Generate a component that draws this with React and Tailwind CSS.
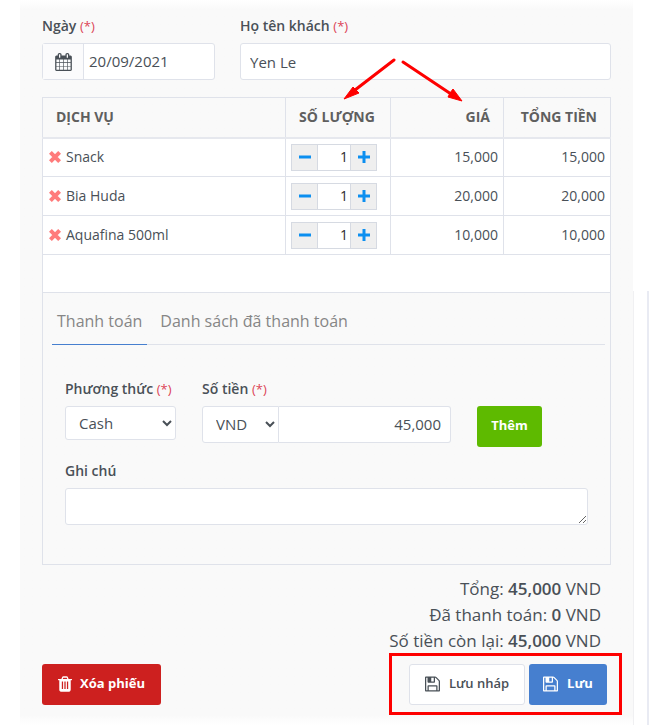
import { useState } from 'react';

const initialItems = [
  { id: 1, name: 'Snack', qty: 1, price: 15000 },
  { id: 2, name: 'Bia Huda', qty: 1, price: 20000 },
  { id: 3, name: 'Aquafina 500ml', qty: 1, price: 10000 },
];

const money = (n) => n.toLocaleString('en-US');

// Font glyph outlines have y pointing up, so they are flipped here
function Glyph({ d, width, className }) {
  return (
    <svg viewBox={`0 0 ${width} 1792`} className={className} fill="currentColor" aria-hidden="true">
      <path transform="translate(0 1536) scale(1 -1)" d={d} />
    </svg>
  );
}

function CalendarIcon() {
  return (
    <Glyph
      width={1664}
      className="h-[18px] w-[17px]"
      d="M128 -128h288v288h-288v-288zM480 -128h320v288h-320v-288zM128 224h288v320h-288v-320zM480 224h320v320h-320v-320zM128 608h288v288h-288v-288zM864 -128h320v288h-320v-288zM480 608h320v288h-320v-288zM1248 -128h288v288h-288v-288zM864 224h320v320h-320v-320zM512 1088v288q0 13 -9.5 22.5t-22.5 9.5h-64q-13 0 -22.5 -9.5t-9.5 -22.5v-288q0 -13 9.5 -22.5t22.5 -9.5h64q13 0 22.5 9.5t9.5 22.5zM1248 224h288v320h-288v-320zM864 608h320v288h-320v-288zM1248 608h288v288h-288v-288zM1280 1088v288q0 13 -9.5 22.5t-22.5 9.5h-64q-13 0 -22.5 -9.5t-9.5 -22.5v-288q0 -13 9.5 -22.5t22.5 -9.5h64q13 0 22.5 9.5t9.5 22.5zM1664 1152v-1280q0 -52 -38 -90t-90 -38h-1408q-52 0 -90 38t-38 90v1280q0 52 38 90t90 38h128v96q0 66 47 113t113 47h64q66 0 113 -47t47 -113v-96h384v96q0 66 47 113t113 47h64q66 0 113 -47t47 -113v-96h128q52 0 90 -38t38 -90z"
    />
  );
}

function TrashIcon() {
  return (
    <Glyph
      width={1408}
      className="h-[18px] w-[14px]"
      d="M512 160v704q0 14 -9 23t-23 9h-64q-14 0 -23 -9t-9 -23v-704q0 -14 9 -23t23 -9h64q14 0 23 9t9 23zM768 160v704q0 14 -9 23t-23 9h-64q-14 0 -23 -9t-9 -23v-704q0 -14 9 -23t23 -9h64q14 0 23 9t9 23zM1024 160v704q0 14 -9 23t-23 9h-64q-14 0 -23 -9t-9 -23v-704q0 -14 9 -23t23 -9h64q14 0 23 9t9 23zM480 1152h448l-48 117q-7 9 -17 11h-317q-10 -2 -17 -11zM1408 1120v-64q0 -14 -9 -23t-23 -9h-96v-948q0 -83 -47 -143.5t-113 -60.5h-832q-66 0 -113 58.5t-47 141.5v952h-96q-14 0 -23 9t-9 23v64q0 14 9 23t23 9h309l70 167q15 37 54 63t79 26h320q40 0 79 -26t54 -63l70 -167h309q14 0 23 -9t9 -23z"
    />
  );
}

function SaveIcon() {
  return (
    <Glyph
      width={1536}
      className="h-[18px] w-[15px]"
      d="M384 0h768v384h-768v-384zM1280 0h128v896q0 14 -10 38.5t-20 34.5l-281 281q-10 10 -34 20t-39 10v-416q0 -40 -28 -68t-68 -28h-576q-40 0 -68 28t-28 68v416h-128v-1280h128v416q0 40 28 68t68 28h832q40 0 68 -28t28 -68v-416zM896 928v320q0 13 -9.5 22.5t-22.5 9.5h-192q-13 0 -22.5 -9.5t-9.5 -22.5v-320q0 -13 9.5 -22.5t22.5 -9.5h192q13 0 22.5 9.5t9.5 22.5zM1536 896v-928q0 -40 -28 -68t-68 -28h-1344q-40 0 -68 28t-28 68v1344q0 40 28 68t68 28h928q40 0 88 -20t76 -48l280 -280q28 -28 48 -76t20 -88z"
    />
  );
}

function RemoveIcon() {
  return (
    <svg viewBox="0 0 12 12" className="h-3 w-3" fill="none" stroke="currentColor" strokeWidth="4" aria-hidden="true">
      <path d="M1.4 1.4 10.6 10.6M10.6 1.4 1.4 10.6" />
    </svg>
  );
}

function StepIcon({ plus }) {
  return (
    <svg viewBox="0 0 12 12" className="h-3 w-3" fill="none" stroke="currentColor" strokeWidth="3" aria-hidden="true">
      <path d="M0 6H12" />
      {plus && <path d="M6 0V12" />}
    </svg>
  );
}

function Label({ htmlFor, required, children }) {
  return (
    <label htmlFor={htmlFor} className="mb-[5px] block text-sm leading-6 font-semibold whitespace-nowrap">
      {children} {required && <span className="text-[13px] font-normal text-[#dc4456]">(*)</span>}
    </label>
  );
}

function Stepper({ name, value, onChange }) {
  return (
    <div className="flex h-[27px] w-[86px] border border-[#d6dae2] bg-white">
      <button
        type="button"
        aria-label={`Giảm ${name}`}
        onClick={() => onChange(Math.max(0, value - 1))}
        className="flex w-[26px] shrink-0 items-center justify-center border-r border-[#d6dae2] bg-[#efefef] text-[#0c8ff0]"
      >
        <StepIcon />
      </button>
      <input
        aria-label={`Số lượng ${name}`}
        value={value}
        onChange={(e) => onChange(Number(e.target.value) || 0)}
        className="w-full min-w-0 px-[2px] text-right text-sm text-[#2b2b2b] outline-none"
      />
      <button
        type="button"
        aria-label={`Tăng ${name}`}
        onClick={() => onChange(value + 1)}
        className="flex w-[26px] shrink-0 items-center justify-center border-l border-[#d6dae2] bg-[#efefef] text-[#0c8ff0]"
      >
        <StepIcon plus />
      </button>
    </div>
  );
}

function ItemTable({ items, onQty, onRemove }) {
  return (
    <table className="mt-[17px] w-full table-fixed border-collapse border border-b-0 border-[#dfe2ea] text-sm">
      <colgroup>
        <col />
        <col className="w-[105px]" />
        <col className="w-[113px]" />
        <col className="w-[107px]" />
      </colgroup>
      <thead>
        <tr className="h-10 border-b-2 border-[#e6e8ee] font-bold text-[#5f5f5f]">
          <th className="border-r border-[#dfe2ea] px-[13px] text-left">DỊCH VỤ</th>
          <th className="border-r border-[#dfe2ea] px-[13px] text-left whitespace-nowrap">SỐ LƯỢNG</th>
          <th className="border-r border-[#dfe2ea] px-[13px] text-right">GIÁ</th>
          <th className="px-[13px] text-right whitespace-nowrap">TỔNG TIỀN</th>
        </tr>
      </thead>
      <tbody className="bg-white">
        {items.map((item) => (
          <tr key={item.id} className="h-[39px] border-b border-[#dfe2ea]">
            <td className="border-r border-[#dfe2ea] px-[6px]">
              <div className="flex items-center gap-[5px]">
                <button type="button" aria-label={`Xóa ${item.name}`} onClick={() => onRemove(item.id)} className="text-[#ff7b7b]">
                  <RemoveIcon />
                </button>
                {item.name}
              </div>
            </td>
            <td className="border-r border-[#dfe2ea] px-[5px]">
              <Stepper name={item.name} value={item.qty} onChange={(qty) => onQty(item.id, qty)} />
            </td>
            <td className="border-r border-[#dfe2ea] px-[5px] text-right">{money(item.price)}</td>
            <td className="px-[5px] text-right">{money(item.price * item.qty)}</td>
          </tr>
        ))}
        <tr className="h-[37px]">
          <td colSpan={4}></td>
        </tr>
      </tbody>
    </table>
  );
}

const tabs = ['Thanh toán', 'Danh sách đã thanh toán'];

function PaymentPanel({ total }) {
  const [tab, setTab] = useState(0);

  return (
    <section className="border border-[#dfe2ea] pt-[9px] pr-[5px] pb-[39px] pl-[9px]">
      <div role="tablist" className="flex border-b border-[#dfe2ea]">
        {tabs.map((label, i) => (
          <button
            key={label}
            type="button"
            role="tab"
            aria-selected={tab === i}
            onClick={() => setTab(i)}
            className={`-mb-px h-[43px] border-b px-[5px] pb-[3px] text-base whitespace-nowrap text-[#868686] ${
              tab === i ? 'mr-2 border-[#467fcf]' : 'border-transparent'
            }`}
          >
            {label}
          </button>
        ))}
      </div>

      <div className="mt-8 pr-[17px] pl-[13px]">
        <div className="flex items-start">
          <div className="w-[111px]">
            <Label htmlFor="method" required>Phương thức</Label>
            <select id="method" defaultValue="Cash" className="h-[34px] w-full rounded-[3px] border border-[#dfe2ea] bg-white pl-[9px] text-[15px]">
              <option>Cash</option>
              <option>Card</option>
            </select>
          </div>
          <div className="ml-[26px] w-[249px]">
            <Label htmlFor="amount" required>Số tiền</Label>
            <div className="flex h-[37px]">
              <select aria-label="Tiền tệ" defaultValue="VND" className="w-[77px] shrink-0 rounded-l-[3px] border border-[#dfe2ea] bg-white pl-[9px] text-[15px]">
                <option>VND</option>
                <option>USD</option>
              </select>
              <input
                id="amount"
                defaultValue={money(total)}
                className="w-full min-w-0 rounded-r-[3px] border border-l-0 border-[#dfe2ea] bg-white px-[9px] text-right text-[15px]"
              />
            </div>
          </div>
          <button type="button" className="mt-[29px] ml-[26px] h-[41px] w-[65px] rounded-[3px] bg-[#5eba00] text-[13px] font-bold text-white">
            Thêm
          </button>
        </div>

        <div className="mt-3">
          <Label htmlFor="note">Ghi chú</Label>
          <textarea id="note" rows={1} className="block h-[37px] w-full rounded-[3px] border border-[#dfe2ea] bg-white px-3 py-1" />
        </div>
      </div>
    </section>
  );
}

function TotalRow({ label, value }) {
  return (
    <p>
      {label}: <strong className="font-semibold">{money(value)}</strong> VND
    </p>
  );
}

// Two red pointers at the quantity and price columns
function Arrows() {
  return (
    <svg viewBox="0 0 122 46" className="pointer-events-none absolute top-[58px] right-[168px] h-[46px] w-[122px]" fill="#fe0000" stroke="#fe0000" aria-hidden="true">
      <path d="M51 2 12 32" strokeWidth="3" strokeLinecap="round" />
      <path d="M1 41 10 29 13 32 16 35Z" strokeWidth="1" />
      <path d="M60 4 108 36" strokeWidth="3" strokeLinecap="round" />
      <path d="M119 43 110 31 107 35 105 39Z" strokeWidth="1" />
    </svg>
  );
}

export default function App() {
  const [items, setItems] = useState(initialItems);
  const total = items.reduce((sum, item) => sum + item.price * item.qty, 0);

  const handleQty = (id, qty) => {
    setItems(items.map((item) => (item.id === id ? { ...item, qty } : item)));
  };

  const handleRemove = (id) => {
    setItems(items.filter((item) => item.id !== id));
  };

  return (
    <div className="flex min-h-screen bg-white font-['Open_Sans','Noto_Sans',sans-serif] text-[#495057]">
      <main className="relative ml-5 min-w-0 flex-1 bg-linear-to-b from-white via-[#f9f9f9] via-[10px] to-[#f9f9f9] px-[22px] pt-[14px]">
        <div className="flex gap-[25px]">
          <div className="w-[173px]">
            <Label htmlFor="date" required>Ngày</Label>
            <div className="flex h-[37px] rounded-[3px] border border-[#dfe2ea] bg-white">
              <span className="flex w-[41px] shrink-0 items-center justify-center border-r border-[#dfe2ea] bg-[#fbfbfc]">
                <CalendarIcon />
              </span>
              <input id="date" defaultValue="20/09/2021" className="w-full min-w-0 px-[5px] text-[15px]" />
            </div>
          </div>
          <div className="flex-1">
            <Label htmlFor="guest" required>Họ tên khách</Label>
            <input id="guest" defaultValue="Yen Le" className="h-[37px] w-full rounded-[3px] border border-[#dfe2ea] bg-white px-[9px] text-[15px]" />
          </div>
        </div>

        <ItemTable items={items} onQty={handleQty} onRemove={handleRemove} />
        <PaymentPanel total={total} />

        <div className="mt-[11px] mr-[10px] text-right text-[17px] leading-[26px]">
          <TotalRow label="Tổng" value={total} />
          <TotalRow label="Đã thanh toán" value={0} />
          <TotalRow label="Số tiền còn lại" value={total} />
        </div>

        <div className="mt-[10px] flex items-center justify-between text-[13px] font-bold">
          <button type="button" className="flex h-[41px] w-[119px] items-center justify-center gap-2 rounded-[3px] bg-[#cd201f] text-white">
            <TrashIcon /> Xóa phiếu
          </button>
          <div className="relative mr-1 flex gap-1">
            <button type="button" className="flex h-[41px] w-[116px] items-center justify-center gap-[9px] rounded-[3px] border border-[#dfe2ea] bg-white font-semibold">
              <SaveIcon /> Lưu nháp
            </button>
            <button type="button" className="flex h-[41px] w-[78px] items-center justify-center gap-[9px] rounded-[3px] bg-[#467fcf] text-white">
              <SaveIcon /> Lưu
            </button>
            <div className="pointer-events-none absolute -top-[11px] -right-[15px] -bottom-[10px] -left-5 border-3 border-[#fe0000]"></div>
          </div>
        </div>

        <div className="-mx-[22px] mt-[10px] h-[10px] bg-linear-to-b from-[#f9f9f9] to-white"></div>

        <Arrows />
      </main>
      <aside className="mt-[291px] mr-[17px] w-4 border-r-2 border-l border-r-[#e9ebf3] border-l-[#f0f0f2]"></aside>
    </div>
  );
}
